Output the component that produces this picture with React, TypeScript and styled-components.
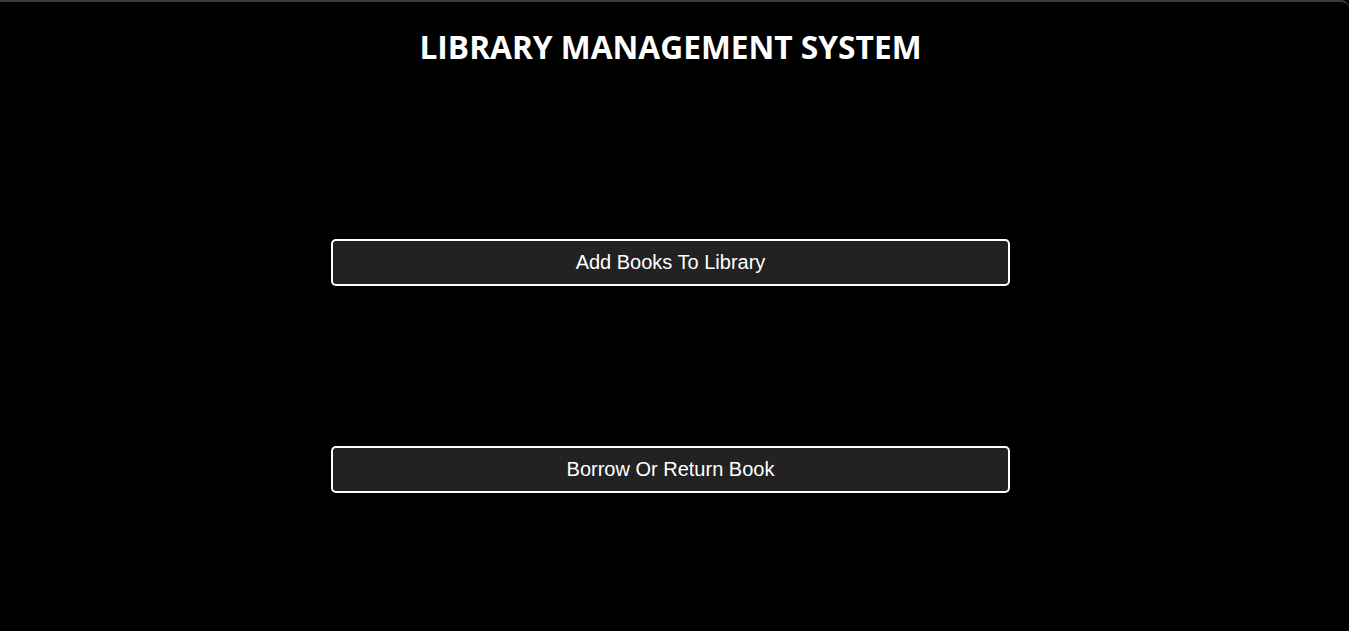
import React from "react";
import styled, { createGlobalStyle } from "styled-components";

const Global = createGlobalStyle`
  html, body { margin: 0; padding: 0; background: #000; }
  body { font-family: "Liberation Sans", Arial, sans-serif; }
`;

const Frame = styled.div`
  box-sizing: border-box;
  min-height: 631px;
  background: #000;
  border-top: 2px solid #3a3a3a;
  border-top-right-radius: 8px;
  padding-right: 8px;
  display: flex;
  flex-direction: column;
  align-items: center;
`;

const Title = styled.h1`
  margin: 25px 0 0;
  font-family: "Open Sans", "Noto Sans", sans-serif;
  font-weight: 700;
  font-size: 31.7px;
  line-height: 40px;
  color: #fff;
  letter-spacing: 0;
`;

const Menu = styled.div`
  display: flex;
  flex-direction: column;
  align-items: center;
  gap: 160px;
  margin-top: 172px;
`;

const MenuButton = styled.button`
  box-sizing: border-box;
  width: 679px;
  height: 47px;
  background: #222;
  border: 2px solid #fff;
  border-radius: 5px;
  color: #fff;
  font-family: "Liberation Sans", Arial, sans-serif;
  font-size: 20px;
  cursor: pointer;
`;

export default function App() {
  return (
    <>
      <Global />
      <Frame>
        <Title>LIBRARY MANAGEMENT SYSTEM</Title>
        <Menu>
          <MenuButton>Add Books To Library</MenuButton>
          <MenuButton>Borrow Or Return Book</MenuButton>
        </Menu>
      </Frame>
    </>
  );
}
